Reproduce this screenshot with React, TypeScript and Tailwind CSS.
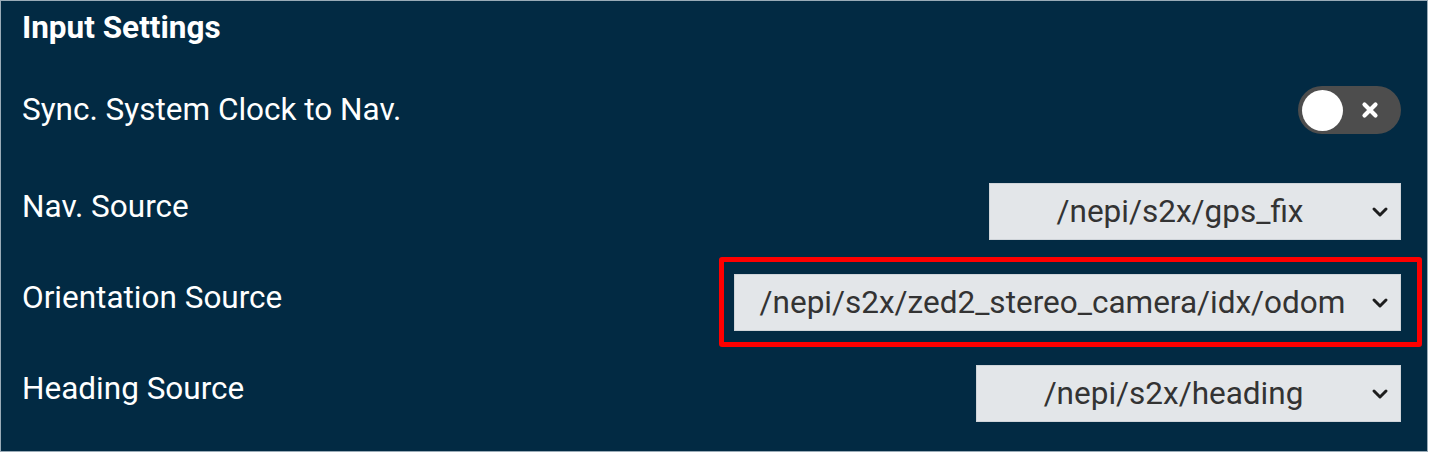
import { Fragment } from "react";

const Chevron = () => (
  <svg width="20" height="12" viewBox="0 0 20 12" className="shrink-0">
    <polyline points="4,3 10,9 16,3" fill="none" stroke="#1e1e1e" strokeWidth="3" strokeLinecap="round" strokeLinejoin="round" />
  </svg>
);

const SelectBox = ({ value, width }: { value: string; width: string }) => (
  <div className={`${width} h-[57px] bg-[#e3e6e9] border border-[#cfd4d9] flex items-center pr-[10px]`}>
    <span className="flex-1 text-center text-[31.5px] text-[#333333] whitespace-nowrap">{value}</span>
    <Chevron />
  </div>
);

const App = () => {
  return (
    <Fragment>
      <div className="w-[1428px] h-[452px] bg-[#022a43] border border-[#9aabb7] text-white px-[21px] font-['Roboto',sans-serif]">
        {/* title */}
        <div className="h-[53px] flex items-center">
          <h2 className="text-[31.5px] font-bold">Input Settings</h2>
        </div>

        {/* sync clock */}
        <div className="h-[112px] flex items-center justify-between">
          <span className="text-[31.5px]">Sync. System Clock to Nav.</span>
          <div className="w-[103px] h-[48px] rounded-full bg-[#4d4d4d] flex items-center px-[4px] mr-[5px]">
            <div className="w-[41px] h-[41px] rounded-full bg-white"></div>
            <div className="flex-1 flex justify-center">
              <svg width="18" height="18" viewBox="0 0 18 18">
                <path d="M3.5 3.5 L14.5 14.5 M14.5 3.5 L3.5 14.5" stroke="white" strokeWidth="4.2" strokeLinecap="round" />
              </svg>
            </div>
          </div>
        </div>

        {/* nav source */}
        <div className="h-[91px] flex items-center justify-between">
          <span className="text-[31.5px] pb-[9px]">Nav. Source</span>
          <div className="mr-[5px]">
            <SelectBox value="/nepi/s2x/gps_fix" width="w-[412px]" />
          </div>
        </div>

        {/* orientation source */}
        <div className="h-[91px] flex items-center justify-between">
          <span className="text-[31.5px] pb-[9px]">Orientation Source</span>
          <div className="relative mr-[5px]">
            <SelectBox value="/nepi/s2x/zed2_stereo_camera/idx/odom" width="w-[667px]" />
            <div className="absolute -left-[15px] -top-[17px] -right-[21px] -bottom-[16px] border-[5px] border-[#ff0000] rounded-[3px] pointer-events-none"></div>
          </div>
        </div>

        {/* heading source */}
        <div className="h-[91px] flex items-center justify-between">
          <span className="text-[31.5px] pb-[9px]">Heading Source</span>
          <div className="mr-[5px]">
            <SelectBox value="/nepi/s2x/heading" width="w-[425px]" />
          </div>
        </div>
      </div>
    </Fragment>
  );
};

export default App;
